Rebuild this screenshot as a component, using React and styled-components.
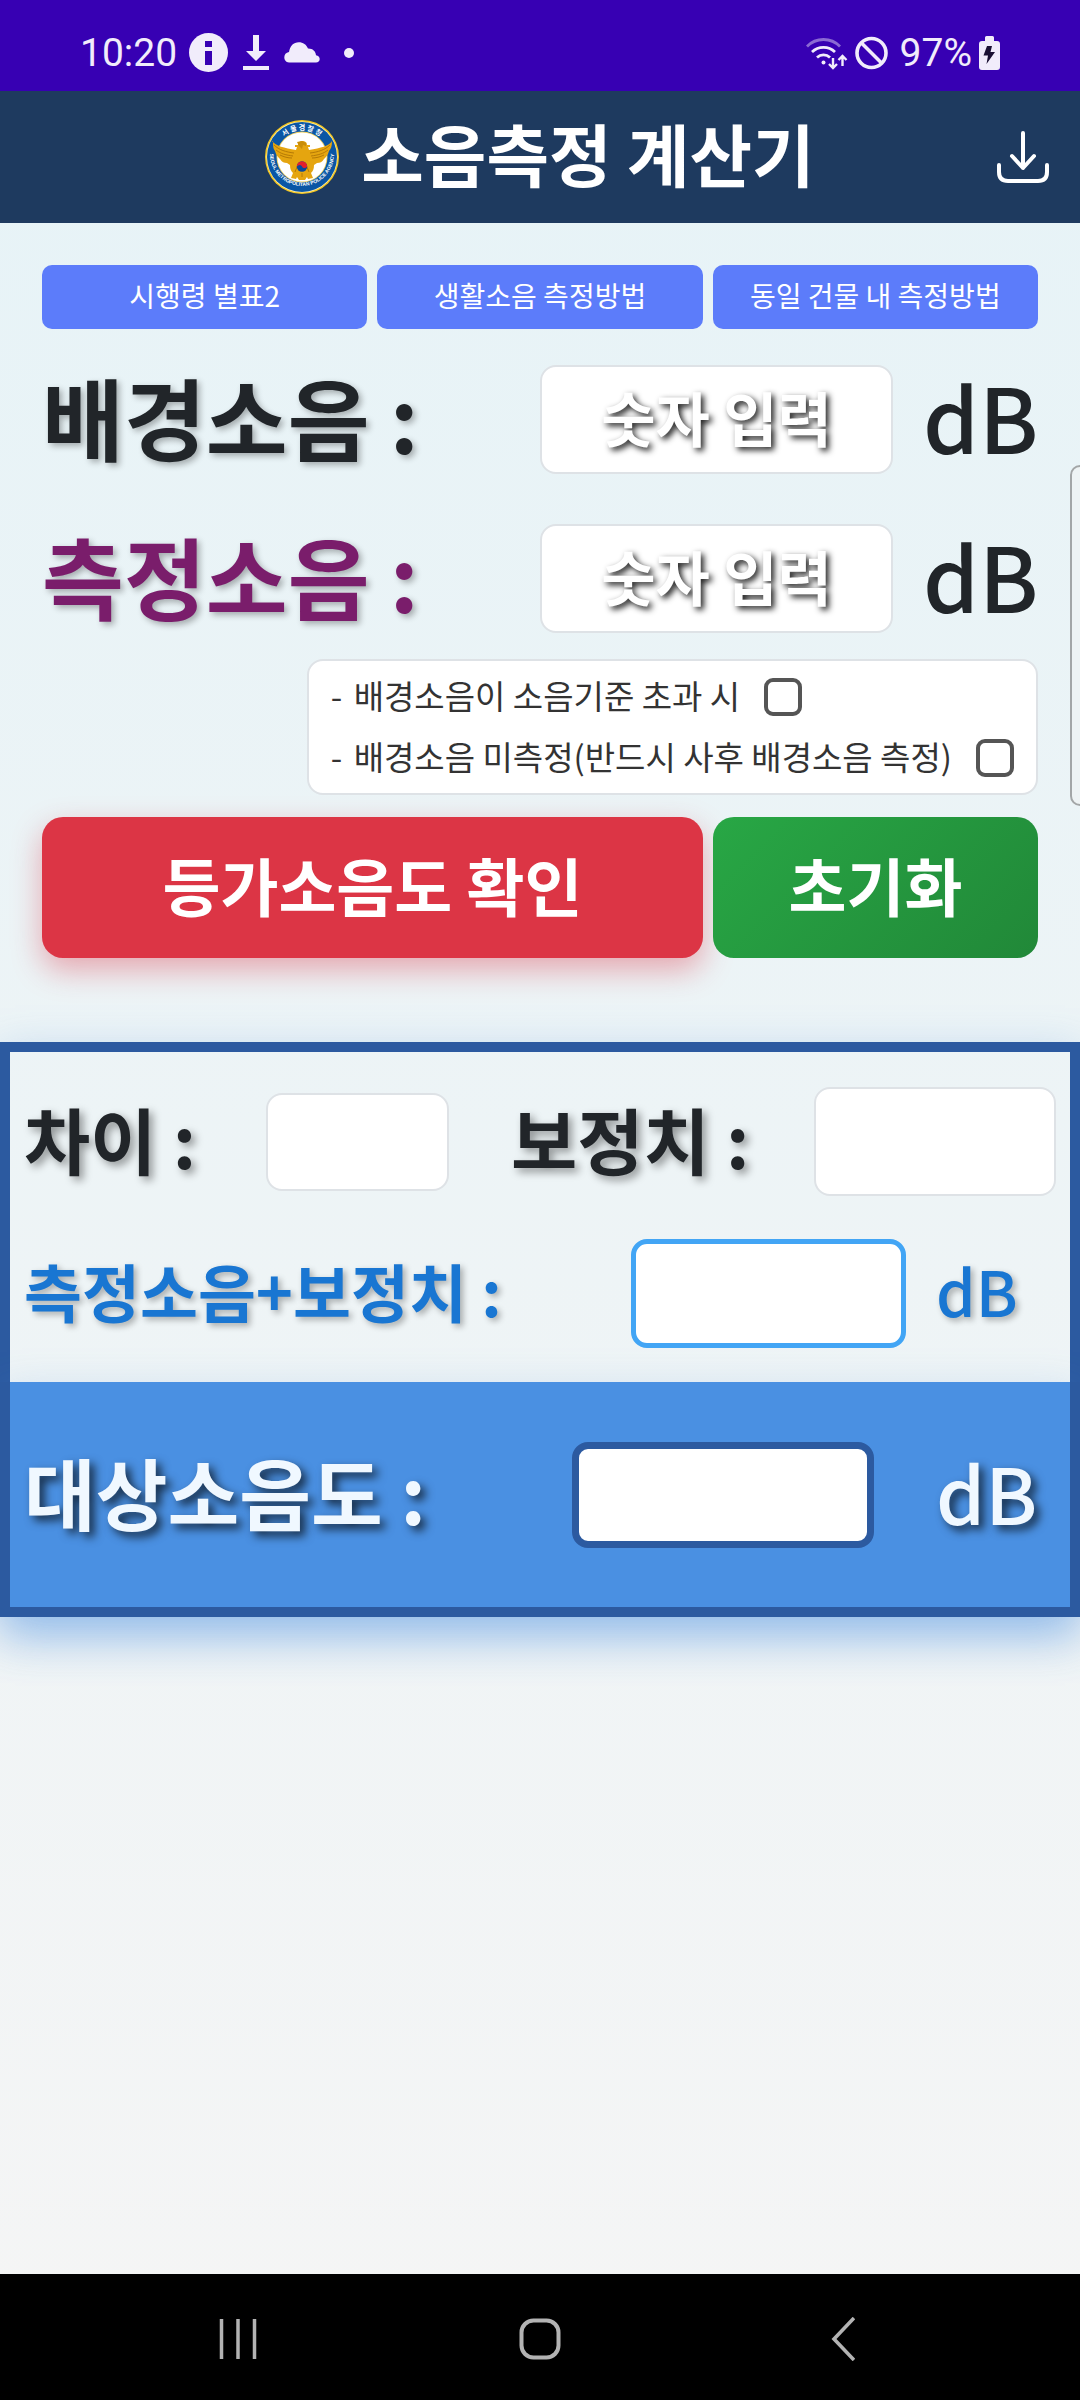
import { useId, useState } from 'react';
import styled, { createGlobalStyle } from 'styled-components';

const GlobalStyle = createGlobalStyle`
  * {
    box-sizing: border-box;
  }

  body {
    margin: 0;
    font-family: 'Noto Sans CJK KR', 'Noto Sans', sans-serif;
    color: #212529;
  }

  button,
  input {
    font-family: inherit;
  }
`;

const Screen = styled.div`
  display: flex;
  flex-direction: column;
  min-height: 100vh;
  overflow-x: hidden;
  position: relative;
  background: linear-gradient(to bottom, #e6f3f7, #f5f5f5);
`;

const StatusBar = styled.div`
  display: flex;
  align-items: center;
  justify-content: space-between;
  height: 91px;
  padding: 14px 80px 0;
  background-color: #3700b3;
  color: #f1ecfb;
  font-family: Roboto, sans-serif;
  font-size: 39px;
  line-height: 46px;
`;

const StatusGroup = styled.div`
  display: flex;
  align-items: center;
  gap: ${(p) => p.$gap}px;

  svg {
    display: block;
  }
`;

const Header = styled.header`
  display: grid;
  grid-template-columns: 115px 1fr 115px;
  align-items: center;
  height: 132px;
  background-color: #1e3a5f;
  color: #fff;
`;

const Brand = styled.div`
  grid-column: 2;
  display: flex;
  align-items: center;
  justify-content: center;
  gap: 22px;
`;

const Title = styled.h1`
  margin: 0;
  padding-bottom: 8px;
  font-size: 68px;
  line-height: 96px;
  font-weight: 700;
`;

const IconButton = styled.button`
  display: flex;
  justify-content: center;
  padding: 0;
  border: none;
  background: none;
  color: inherit;
  cursor: pointer;
`;

const Content = styled.main`
  flex: 1;
  padding-top: 42px;
`;

const Form = styled.form`
  padding: 0 42px;
`;

const LinkRow = styled.div`
  display: grid;
  grid-template-columns: repeat(3, 1fr);
  gap: 10px;
`;

const LinkButton = styled.button`
  height: 64px;
  padding: 0 0 4px;
  border: none;
  border-radius: 10px;
  background-color: #5c7cfa;
  color: #fff;
  font-size: 28px;
  cursor: pointer;
`;

const InputRow = styled.div`
  display: grid;
  grid-template-columns: 1fr 353px 145px;
  align-items: center;
  height: 109px;
  margin-top: ${(p) => (p.$first ? 36 : 50)}px;
`;

const Label = styled.label`
  padding-bottom: 8px;
  font-size: ${(p) => p.$size}px;
  line-height: 100px;
  font-weight: 700;
  white-space: pre;
  color: ${(p) => p.$color || '#212529'};
  text-shadow: ${(p) => p.$shadow || '3px 3px 6px rgba(0, 0, 0, 0.3)'};
`;

const Unit = styled.span`
  padding: 0 0 8px 30px;
  font-size: ${(p) => p.$size}px;
  line-height: 100px;
  font-weight: 500;
  color: ${(p) => p.$color || '#212529'};
  text-shadow: ${(p) => p.$shadow || 'none'};
`;

const Field = styled.input`
  width: 100%;
  height: ${(p) => p.$height || 109}px;
  padding: 0 12px 6px;
  border: ${(p) => p.$border || '2px solid #dee2e6'};
  border-radius: 16px;
  background-color: #fff;
  color: #212529;
  font-size: 59px;
  font-weight: 700;
  text-align: center;
  outline: none;

  &::placeholder {
    color: #fff;
    opacity: 1;
    text-shadow: 3px 3px 6px rgba(0, 0, 0, 0.9);
  }
`;

const Options = styled.div`
  width: fit-content;
  margin: 26px 0 0 auto;
  padding: 5px 22px;
  border: 2px solid #dee2e6;
  border-radius: 16px;
  background-color: #fff;
`;

const Option = styled.label`
  display: flex;
  align-items: center;
  height: 61px;
  color: #333;
  font-size: 33px;
  line-height: 40px;
  white-space: nowrap;

  span {
    padding-bottom: 4px;
  }
`;

const Dash = styled.span`
  width: 23px;
`;

const Checkbox = styled.input`
  appearance: none;
  width: 38px;
  height: 38px;
  margin: 0 0 0 24px;
  border: 4px solid #555;
  border-radius: 9px;
  background-color: #fff;

  &:checked {
    background-color: #555;
  }
`;

const Actions = styled.div`
  display: grid;
  grid-template-columns: 661fr 325fr;
  gap: 10px;
  margin-top: 22px;
`;

const ActionButton = styled.button`
  height: 141px;
  padding: 0 0 8px;
  border: none;
  border-radius: 21px;
  color: #fff;
  font-size: 63px;
  font-weight: 700;
  cursor: pointer;
`;

const SubmitButton = styled(ActionButton)`
  background-color: #dc3545;
  box-shadow: 0 12px 30px rgba(220, 53, 69, 0.4);
`;

const ResetButton = styled(ActionButton)`
  background: linear-gradient(135deg, #28a745, #218838);
`;

const Results = styled.section`
  margin-top: 84px;
  border: 10px solid #2c5aa0;
  box-shadow: 0 16px 44px rgba(74, 144, 226, 0.4);
`;

const DiffRow = styled.div`
  display: grid;
  grid-template-columns: 242px 183px 1fr 242px;
  align-items: center;
  padding: 35px 14px 0;

  label:nth-of-type(2) {
    padding-left: 62px;
  }
`;

const SumRow = styled.div`
  display: grid;
  grid-template-columns: 1fr 275px 164px;
  align-items: center;
  padding: 43px 0 34px 14px;
`;

/* carries its own frame so that its shadow stays behind the border */
const TargetRow = styled.div`
  display: grid;
  grid-template-columns: 1fr 302px 182px;
  align-items: center;
  height: 235px;
  margin: 0 -10px -10px;
  padding: 0 14px;
  border: solid #2c5aa0;
  border-width: 0 10px 10px;
  background-color: #4a90e2;
  box-shadow: 0 16px 44px rgba(74, 144, 226, 0.3);

  ${Unit} {
    padding-left: 62px;
  }
`;

const EdgeHandle = styled.div`
  position: absolute;
  top: 465px;
  right: -10px;
  width: 20px;
  height: 341px;
  border: 2px solid #a3a6a7;
  border-radius: 10px;
  background-color: #eef3f4;
`;

const NavBar = styled.nav`
  display: grid;
  grid-template-columns: 475px 1fr 475px;
  align-items: center;
  height: 126px;
  padding-top: 4px;
  background-color: #000;
  color: #b3b3b3;
`;

const strongShadow = '4px 4px 8px rgba(0, 0, 0, 0.4)';
const targetShadow = '5px 5px 10px rgba(0, 0, 0, 0.7)';

const InfoIcon = () => (
  <svg width="39" height="39" viewBox="0 0 39 39">
    <circle cx="19.5" cy="19.5" r="19.5" fill="currentColor" />
    <path d="M16 8h7v6h-7zM16 18h7v14h-7z" fill="#3700b3" />
  </svg>
);

const DownloadingIcon = () => (
  <svg width="32" height="36" viewBox="-3 0 32 36" fill="currentColor">
    <path d="M10 0h6v16h7L13 26 3 16h7zM0 31h26v4H0z" />
  </svg>
);

const CloudIcon = () => (
  <svg width="36" height="21" viewBox="0 0 36 21" fill="currentColor">
    <path d="M5 20.500C2 20.500.300 18 .300 15.300c0-2.600 1.700-4.600 4.700-5.200C6 4 9.500.300 14.800.300c4.200 0 7.700 2.400 9.200 6.300 4.500-.2 7.600 2.700 8 6.600 2.300.4 3.700 1.800 3.700 3.700 0 2-1.500 3.600-3.700 3.600z" />
  </svg>
);

const DotIcon = () => (
  <svg width="34" height="10" viewBox="0 0 34 10">
    <circle cx="17" cy="5" r="5" fill="currentColor" />
  </svg>
);

const WifiIcon = () => (
  <svg width="42" height="34" viewBox="0 0 42 34" fill="none" stroke="currentColor" strokeWidth="2.800">
    <path d="M1 10.500a23 23 0 0 1 33 0" opacity=".45" />
    <path d="M6 16a16.500 16.500 0 0 1 23 0M11 21.500a9.500 9.500 0 0 1 13 0" />
    <circle cx="17.500" cy="26.500" r="2" fill="currentColor" stroke="none" />
    <path d="M27 22v10M23 28l4 4 4-4M36.500 30V20M32.500 24l4-4 4 4" strokeWidth="2.400" />
  </svg>
);

const BlockIcon = () => (
  <svg width="38" height="34" viewBox="0 0 38 34" fill="none" stroke="currentColor" strokeWidth="3.600">
    <circle cx="16.500" cy="17" r="14.500" />
    <path d="M6.500 7l20 20" />
  </svg>
);

const BatteryIcon = () => (
  <svg width="21" height="34" viewBox="0 0 21 34">
    <path d="M6 1.500Q6 0 7.500 0h6Q15 0 15 1.500V5h3q3 0 3 3v23q0 3-3 3H3q-3 0-3-3V8q0-3 3-3h3z" fill="currentColor" />
    <path d="M8 10h5l-1.500 6H16L7.500 28l1.500-8.500H4.500z" fill="#1a1033" />
  </svg>
);

const PoliceLogo = () => (
  <svg width="74" height="74" viewBox="0 0 74 74" role="img" aria-label="서울경찰청">
    <defs>
      <path id="logo-top" d="M10 37a27 27 0 0 1 54 0" />
      <path id="logo-bottom" d="M5 34a32 32 0 0 0 64 0" />
    </defs>
    <circle cx="37" cy="37" r="37" fill="#f3c623" />
    <circle cx="37" cy="37" r="35.600" fill="#fff3b8" />
    <circle cx="37" cy="37" r="35" fill="#0a56a5" />
    <circle cx="37" cy="37" r="25.500" fill="#f0d060" />
    <circle cx="37" cy="37" r="24.600" fill="#fff" />
    <g fill="#fff" fontWeight="700" textAnchor="middle">
      <text fontSize="7">
        <textPath href="#logo-top" startOffset="50%">서  울  경  찰  청</textPath>
      </text>
      <text fontSize="5" fontFamily="Liberation Sans, sans-serif">
        <textPath href="#logo-bottom" startOffset="50%">SEOUL METROPOLITAN POLICE AGENCY</textPath>
      </text>
    </g>
    <path d="M7 21c4 5 12 7 24 9l1-3h-2v-2h3c0-3 2-4 4-4 3 0 5 1 5 4h3v2h-2l1 3c12-2 20-4 23-9 0 5-1 8-3 10-1 4-3 6-5 8-2 3-4 4-7 4l-3 2c0 4-1 6-3 8l2 5-5 1-1-2-2 3h-6l-2-3-1 2-5-1 2-5c-2-2-3-4-3-8l-3-2c-3 0-5-1-7-4-2-2-4-4-5-8-2-2-2-5-2-10z" fill="#e5a50f" />
    <path d="M9 25c5 5 12 7 20 8M11 30c5 4 10 5 17 6M15 35c4 2 8 3 12 3M65 25c-5 5-12 7-20 8M63 30c-5 4-10 5-17 6M59 35c-4 2-8 3-12 3M30 52l2-5M44 52l-2-5M37 57v-4" fill="none" stroke="#b57a06" strokeWidth="1" />
    <path d="M32 22l5-1 4 2v3l-3-1-1 4-3-3z" fill="#c98d08" />
    <circle cx="37" cy="46.500" r="5.200" fill="#0a4a9a" />
    <path d="M31.800 46.500a5.200 5.200 0 0 1 10.400 0c-1.700 2-4 2-5.200 0s-3.500-2-5.200 0z" fill="#e4202c" />
  </svg>
);

const SaveIcon = () => (
  <svg width="52" height="52" viewBox="0 0 52 52" fill="none" stroke="currentColor" strokeWidth="4" strokeLinecap="round" strokeLinejoin="round">
    <path d="M26 2v35M15 25l11 12 11-12M2 34v7q0 9 9 9h30q9 0 9-9v-7" />
  </svg>
);

const RecentsIcon = () => (
  <svg width="38" height="42" viewBox="0 0 38 42" stroke="currentColor" strokeWidth="3.500">
    <path d="M2.500 1v40M19 1v40M35.500 1v40" />
  </svg>
);

const HomeIcon = () => (
  <svg width="42" height="42" viewBox="0 0 42 42" fill="none" stroke="currentColor" strokeWidth="4">
    <rect x="2.500" y="2.500" width="37" height="37" rx="12" />
  </svg>
);

const BackIcon = () => (
  <svg width="24" height="44" viewBox="0 0 24 44" fill="none" stroke="currentColor" strokeWidth="3.600">
    <path d="M23 1L3 22l20 21" />
  </svg>
);

const NoiseInput = ({ label, color, first, value, onChange }) => {
  const id = useId();

  return (
    <InputRow $first={first}>
      <Label htmlFor={id} $size={89} $color={color}>
        {label}
      </Label>
      <Field id={id} inputMode="decimal" placeholder="숫자 입력" value={value} onChange={onChange} />
      <Unit $size={89}>dB</Unit>
    </InputRow>
  );
};

const CheckOption = ({ children }) => (
  <Option>
    <Dash>-</Dash>
    <span>{children}</span>
    <Checkbox type="checkbox" />
  </Option>
);

const App = () => {
  const [background, setBackground] = useState('');
  const [measured, setMeasured] = useState('');

  const handleReset = () => {
    setBackground('');
    setMeasured('');
  };

  return (
    <Screen>
      <GlobalStyle />
      <StatusBar>
        <StatusGroup $gap={12}>
          <span>10:20</span>
          <InfoIcon />
          <DownloadingIcon />
          <CloudIcon />
          <DotIcon />
        </StatusGroup>
        <StatusGroup $gap={7}>
          <WifiIcon />
          <BlockIcon />
          <span>97%</span>
          <BatteryIcon />
        </StatusGroup>
      </StatusBar>

      <Header>
        <Brand>
          <PoliceLogo />
          <Title>소음측정 계산기</Title>
        </Brand>
        <IconButton type="button" aria-label="다운로드">
          <SaveIcon />
        </IconButton>
      </Header>

      <Content>
        <Form onSubmit={(e) => e.preventDefault()} onReset={handleReset}>
          <LinkRow>
            <LinkButton type="button">시행령 별표2</LinkButton>
            <LinkButton type="button">생활소음 측정방법</LinkButton>
            <LinkButton type="button">동일 건물 내 측정방법</LinkButton>
          </LinkRow>

          <NoiseInput label="배경소음 :" first value={background} onChange={(e) => setBackground(e.target.value)} />
          <NoiseInput label="측정소음 :" color="#7a1d6b" value={measured} onChange={(e) => setMeasured(e.target.value)} />

          <Options>
            <CheckOption>배경소음이 소음기준 초과 시</CheckOption>
            <CheckOption>배경소음 미측정(반드시 사후 배경소음 측정)</CheckOption>
          </Options>

          <Actions>
            <SubmitButton type="submit">등가소음도 확인</SubmitButton>
            <ResetButton type="reset">초기화</ResetButton>
          </Actions>
        </Form>

        <Results>
          <DiffRow>
            <Label htmlFor="difference" $size={72} $shadow={strongShadow}>차이 :</Label>
            <Field id="difference" $height={98} readOnly />
            <Label htmlFor="correction" $size={72} $shadow={strongShadow}>보정치 :</Label>
            <Field id="correction" readOnly />
          </DiffRow>
          <SumRow>
            <Label htmlFor="sum" $size={63} $color="#1976d2">측정소음+보정치 :</Label>
            <Field id="sum" $border="5px solid #42a5f5" readOnly />
            <Unit $size={63} $color="#1976d2" $shadow="3px 3px 6px rgba(0, 0, 0, 0.3)">dB</Unit>
          </SumRow>
          <TargetRow>
            <Label htmlFor="target" $size={78} $color="#f0f8ff" $shadow={targetShadow}>대상소음도 :</Label>
            <Field id="target" $height={106} $border="7px solid #2c5aa0" readOnly />
            <Unit $size={78} $color="#f0f8ff" $shadow={targetShadow}>dB</Unit>
          </TargetRow>
        </Results>
      </Content>

      <NavBar>
        <IconButton type="button" aria-label="최근 앱">
          <RecentsIcon />
        </IconButton>
        <IconButton type="button" aria-label="홈">
          <HomeIcon />
        </IconButton>
        <IconButton type="button" aria-label="뒤로">
          <BackIcon />
        </IconButton>
      </NavBar>
      <EdgeHandle />
    </Screen>
  );
};

export default App;
